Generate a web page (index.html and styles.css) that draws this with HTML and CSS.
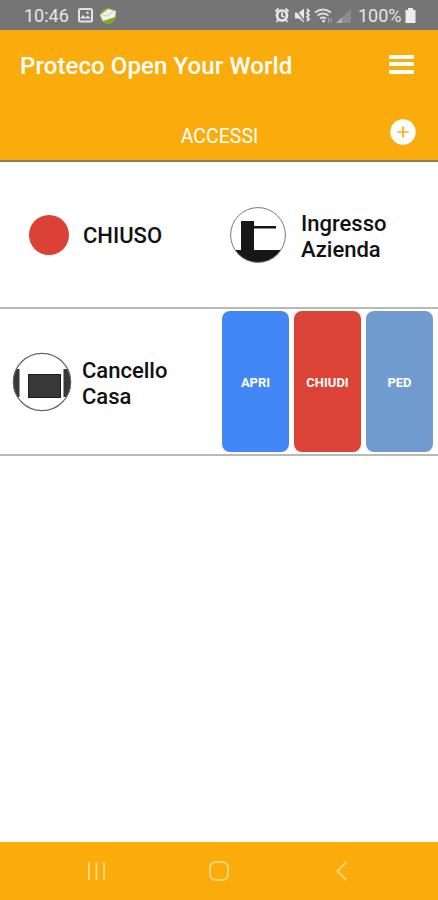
FILE: index.html
```html
<!DOCTYPE html>
<html lang="it">
<head>
    <meta charset="UTF-8">
    <meta name="viewport" content="width=device-width, initial-scale=1.0">
    <title>Proteco Open Your World</title>
    <link rel="stylesheet" href="styles.css">
</head>
<body>
    <div class="status-bar">
        <span class="clock">10:46</span>
        <svg class="status-left" width="42" height="20" viewBox="0 0 42 20">
            <rect x="2" y="3" width="13" height="12.500" rx="1.500" fill="none" stroke="#e4e4e4" stroke-width="2"/>
            <path d="M3 12.500l3-3.500 2.500 2.500 2-2 3.500 3z" fill="#e4e4e4"/>
            <circle cx="10.500" cy="6.700" r="1.300" fill="#e4e4e4"/>
            <circle cx="31" cy="10" r="8" fill="#7cab25"/>
            <path d="M23 9l8-6 8 2-1 6-12 4z" fill="#f0f0ec"/>
            <path d="M25 9l5 1 7-5" fill="none" stroke="#c8cfc0"/>
        </svg>
        <svg class="status-right" width="80" height="20" viewBox="0 0 80 20">
            <g fill="none" stroke="#e8e8e8">
                <circle cx="8" cy="9.500" r="5" stroke-width="2.700"/>
                <path d="M8 6.500v3.500l2.500 1M1.500 5.500l3-3M14.500 5.500l-3-3M4 14l-1.500 2M12 14l1.500 2" stroke-width="1.800"/>
            </g>
            <path d="M21 6.500h4l5-4v14l-5-4h-4z" fill="#e8e8e8"/>
            <path d="M21 2.500l9 12" stroke="#757575" stroke-width="1.300"/>
            <path d="M33 3l2 2-2 2 2 2-2 2 2 2-2 2" fill="none" stroke="#e8e8e8" stroke-width="1.800"/>
            <path d="M41 6.500q8-6 16 0M43.500 9.500q5.500-4 11 0M46 12.500q3-2 6 0" fill="none" stroke="#dedede" stroke-width="1.800"/>
            <circle cx="49.500" cy="15" r="1.500" fill="#dedede"/>
            <path d="M54.500 12v5M57 12v5" stroke="#a8a8a8"/>
            <path d="M77 3v14H62z" fill="#8c8c8c"/>
            <path d="M68 11.500v5.500h-6z" fill="#b0b0b0"/>
        </svg>
        <span class="percent">100%</span>
        <svg width="11" height="16" viewBox="0 0 11 16">
            <path d="M3 0h5v2h2.500v13H.5V2H3z" fill="#ededed"/>
        </svg>
    </div>

    <header class="header">
        <div class="title-row">
            <h1>Proteco Open Your World</h1>
            <div class="menu">
                <span></span>
                <span></span>
                <span></span>
            </div>
        </div>
        <div class="section-row">
            <h2>ACCESSI</h2>
            <svg class="add" width="26" height="26" viewBox="0 0 26 26">
                <circle cx="13" cy="13" r="12.700" fill="#fff"/>
                <path d="M13 7.500v11M7.500 13h11" stroke="#faac0c" stroke-width="1.700"/>
            </svg>
        </div>
    </header>

    <main>
        <div class="row">
            <div class="state">
                <span class="dot"></span>
                <span class="label status">CHIUSO</span>
            </div>
            <div class="access access-right">
                <svg width="56" height="56" viewBox="0 0 56 56">
                    <clipPath id="barrier"><circle cx="28" cy="28" r="27.500"/></clipPath>
                    <g clip-path="url(#barrier)" fill="#171717">
                        <path d="M11 14h13v29h32v13H0V43h11z"/>
                        <rect x="24" y="19" width="22" height="2.500"/>
                    </g>
                    <circle cx="28" cy="28" r="27.400" fill="none" stroke="#777"/>
                </svg>
                <span class="label">Ingresso<br>Azienda</span>
            </div>
        </div>
        <div class="row">
            <div class="access">
                <svg width="60" height="60" viewBox="0 0 60 60">
                    <clipPath id="gate"><circle cx="30" cy="30" r="29"/></clipPath>
                    <g clip-path="url(#gate)" fill="#383838">
                        <rect x="0" y="17" width="7" height="28"/>
                        <rect x="52" y="17" width="9" height="28"/>
                        <path d="M7.500 17v28M51.500 17v28" stroke="#999"/>
                    </g>
                    <rect x="16.500" y="22.500" width="32" height="23" fill="#383838" stroke="#1c1c1c"/>
                    <circle cx="30" cy="30" r="28.700" fill="none" stroke="#666" stroke-width="1.200"/>
                </svg>
                <span class="label">Cancello<br>Casa</span>
            </div>
            <div class="actions">
                <button class="open">APRI</button>
                <button class="close">CHIUDI</button>
                <button class="ped">PED</button>
            </div>
        </div>
    </main>

    <nav class="nav-bar">
        <svg width="20" height="20" viewBox="0 0 20 20">
            <path d="M3 1v18M10.500 1v18M18 1v18"/>
        </svg>
        <svg width="22" height="22" viewBox="0 0 22 22">
            <rect x="2" y="2" width="18" height="18" rx="5.500"/>
        </svg>
        <svg width="20" height="20" viewBox="0 0 20 20">
            <path d="M14.500 1l-9 9 9 9"/>
        </svg>
    </nav>
</body>
</html>
```

FILE: styles.css
```css
* {
    box-sizing: border-box;
}

body {
    font-family: Roboto, sans-serif;
    background-color: #fff;
    display: flex;
    flex-direction: column;
    height: 900px;
    margin: 0;
    overflow: hidden;
}

svg {
    display: block;
    flex-shrink: 0;
}

.status-bar {
    height: 30px;
    background-color: #757575;
    color: #e6e6e6;
    display: flex;
    align-items: center;
    padding: 1px 22px 0 24px;
    font-size: 18px;
}

.clock {
    width: 53px;
}

.status-right {
    margin-left: auto;
    margin-right: 4px;
}

.percent {
    width: 47px;
    white-space: nowrap;
}

.header {
    height: 132px;
    background-color: #faac0c;
    border-bottom: 2px solid #8e7a55;
    color: #fff;
}

.title-row {
    height: 70px;
    display: flex;
    justify-content: space-between;
    align-items: center;
    padding: 0 24px 0 20px;
}

h1 {
    font-size: 24px;
    font-weight: 500;
    letter-spacing: 0.1px;
    margin: 1px 0 0;
}

.menu {
    display: flex;
    flex-direction: column;
    gap: 3.5px;
    padding-bottom: 2px;
}

.menu span {
    width: 25px;
    height: 4px;
    border-radius: 1px;
    background-color: #fff;
}

.section-row {
    height: 60px;
    display: grid;
    grid-template-columns: 1fr auto 1fr;
    align-items: center;
    padding: 4px 22px 0 23px;
}

h2 {
    grid-column: 2;
    font-size: 19.5px;
    font-weight: 400;
    margin: 8px 0 0;
}

.add {
    justify-self: end;
}

.row {
    height: 147px;
    display: flex;
    align-items: center;
    border-bottom: 2px solid #b9b9b9;
}

.state,
.access {
    display: flex;
    align-items: center;
}

.state {
    width: 230px;
    padding-left: 29px;
    gap: 14px;
}

.dot {
    width: 40px;
    height: 40px;
    border-radius: 50%;
    background-color: #dc4135;
}

.label {
    font-size: 22px;
    font-weight: 500;
    line-height: 26px;
    padding-top: 4px;
    color: #111;
}

.status {
    padding-top: 3px;
}

.access {
    width: 222px;
    padding-left: 12px;
    gap: 10px;
}

.access-right {
    width: auto;
    padding-left: 0;
    gap: 15px;
}

.actions {
    display: flex;
    gap: 5px;
}

.actions button {
    width: 67px;
    height: 141px;
    padding: 2px 0 0;
    border: none;
    border-radius: 8px;
    color: #fff;
    font-family: inherit;
    font-size: 13px;
    font-weight: 700;
}

.actions .open {
    background-color: #4287f5;
}

.actions .close {
    background-color: #dc4337;
}

.actions .ped {
    background-color: #709bd0;
}

.nav-bar {
    height: 58px;
    margin-top: auto;
    background-color: #faac0c;
    display: flex;
    justify-content: space-between;
    align-items: center;
    padding: 0 86px;
}

.nav-bar svg {
    fill: none;
    stroke: #fdd376;
    stroke-width: 2;
}
```
